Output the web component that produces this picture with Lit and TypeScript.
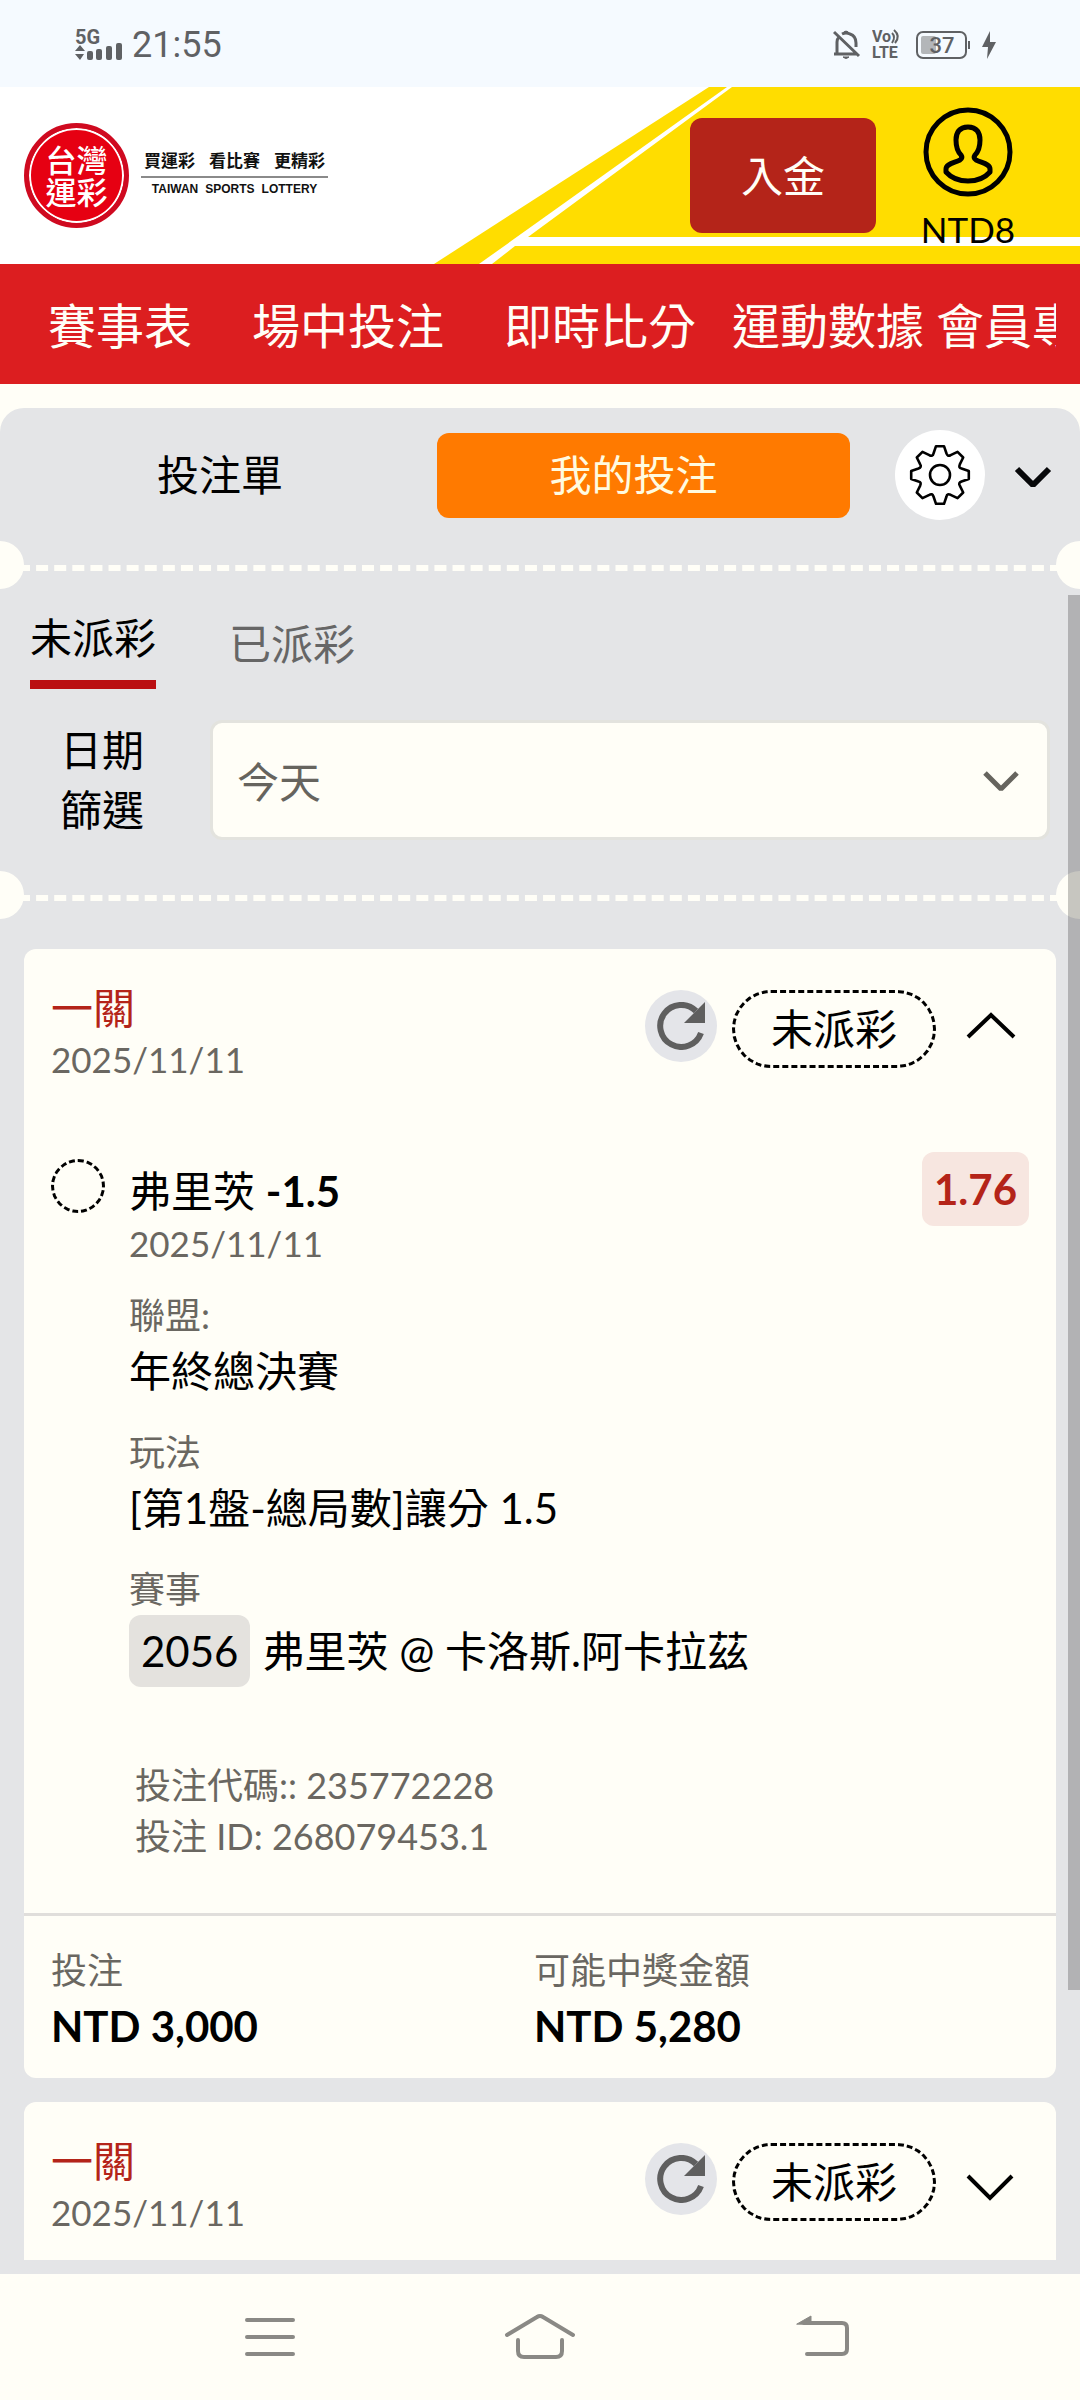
import { LitElement, html, css, svg, nothing } from "lit";
import { customElement, property } from "lit/decorators.js";

interface Pick {
  team: string;
  handicap: string;
  date: string;
  odds: string;
  league: string;
  market: string;
  eventNo: string;
  fixture: string;
  code: string;
  betId: string;
  stake: string;
  payout: string;
}

interface Bet {
  title: string;
  date: string;
  status: string;
  pick?: Pick;
}

const BETS: Bet[] = [
  {
    title: "一關",
    date: "2025/11/11",
    status: "未派彩",
    pick: {
      team: "弗里茨",
      handicap: "-1.5",
      date: "2025/11/11",
      odds: "1.76",
      league: "年終總決賽",
      market: "[第1盤-總局數]讓分 1.5",
      eventNo: "2056",
      fixture: "弗里茨 @ 卡洛斯.阿卡拉茲",
      code: "235772228",
      betId: "268079453.1",
      stake: "NTD 3,000",
      payout: "NTD 5,280",
    },
  },
  { title: "一關", date: "2025/11/11", status: "未派彩" },
];

const base = css`
  * {
    box-sizing: border-box;
  }
  button,
  select {
    font: inherit;
    color: inherit;
    background: none;
    border: 0;
    margin: 0;
    padding: 0;
  }
  a {
    color: inherit;
    text-decoration: none;
  }
  svg {
    display: block;
    flex: none;
  }
`;

/** Outline of an eight-toothed cog centred on the origin. */
function cogPath(): string {
  const tooth = [
    [-6.5, -21.5],
    [-4, -28.8],
    [4, -28.8],
    [6.5, -21.5],
    [7.9, -18],
  ];
  let d = "";
  for (let k = 0; k < 8; k++) {
    const a = (k * Math.PI) / 4;
    const p = tooth.map(([x, y]) => {
      const rx = x * Math.cos(a) - y * Math.sin(a);
      const ry = x * Math.sin(a) + y * Math.cos(a);
      return `${rx.toFixed(2)} ${ry.toFixed(2)}`;
    });
    d += `${k === 0 ? "M" : ""}${p[0]}L${p[1]}L${p[2]}L${p[3]}Q${p[4]} `;
  }
  return `${d}-6.5 -21.5Z`;
}

@customElement("status-bar")
export class StatusBar extends LitElement {
  static styles = [
    base,
    css`
      :host {
        display: flex;
        align-items: center;
        justify-content: space-between;
        height: 87px;
        padding: 2px 84px 0 75px;
        background: #f5faff;
        color: #5f6164;
        font-family: Roboto, sans-serif;
      }
      .side {
        display: flex;
        align-items: center;
      }
      .left {
        gap: 9px;
      }
      .right {
        gap: 11px;
      }
      .time {
        font-size: 36px;
        line-height: 42px;
      }
      .tiny {
        font-weight: 700;
        font-size: 16px;
      }
      .net {
        font-weight: 700;
        font-size: 20px;
      }
      .level {
        font-weight: 500;
        font-size: 22px;
      }
    `,
  ];

  render() {
    return html`
      <div class="side left">
        <svg width="48" height="48" viewBox="0 -8 48 48" fill="currentColor">
          <text class="net" x="0" y="15">5G</text>
          <path d="M5 16l5 6H0zM0 25h9l-4 6z" />
          <rect x="12" y="22" width="6" height="9" rx="2" />
          <rect x="21" y="20" width="6" height="11" rx="2" />
          <rect x="31" y="17" width="6" height="14" rx="2" />
          <rect x="41" y="14" width="6" height="17" rx="2" />
        </svg>
        <span class="time">21:55</span>
      </div>
      <div class="side right">
        <svg width="28" height="30" viewBox="0 0 28 30" fill="none" stroke="currentColor" stroke-width="3">
          <path d="M1 2L26 26M4 24V12Q4 9 6 7M1 24h23M9 4Q13 2 17 4Q23 6 23 13V17" />
          <path d="M10 27h6q-3 3-6 0zM11 2q2-2 4 0z" fill="currentColor" stroke-width="1" />
        </svg>
        <svg width="32" height="46" viewBox="0 -8 32 46" fill="currentColor">
          <text class="tiny" x="0" y="12">Vo</text>
          <text class="tiny" x="0" y="28">LTE</text>
          <path d="M20 3q4 4 0 10M22 0q7 6 1 13" fill="none" stroke="currentColor" stroke-width="2" />
        </svg>
        <svg width="56" height="42" viewBox="0 -6 56 42">
          <rect x="6" y="6" width="15" height="18" rx="2" fill="#b3b6b9" />
          <rect x="2" y="2" width="49" height="26" rx="6" fill="none" stroke="currentColor" stroke-width="2" />
          <path d="M54 11v8" stroke="currentColor" stroke-width="2" />
          <text class="level" x="27" y="23" text-anchor="middle" fill="currentColor">37</text>
        </svg>
        <svg width="14" height="28" viewBox="0 0 14 28" fill="currentColor">
          <path d="M8 0L0 16h6L5 28L14 11H8z" />
        </svg>
      </div>
    `;
  }
}

@customElement("site-header")
export class SiteHeader extends LitElement {
  static styles = [
    base,
    css`
      :host {
        display: flex;
        align-items: center;
        position: relative;
        height: 177px;
        padding: 0 64px 0 24px;
        background: #fff;
        overflow: hidden;
      }
      .stripes {
        position: absolute;
        right: 0;
        top: 0;
      }
      .brand {
        display: flex;
        align-items: center;
        gap: 12px;
      }
      .seal {
        display: grid;
        place-content: center;
        width: 105px;
        height: 105px;
        border-radius: 50%;
        border: 5px solid #cf0a20;
        background: #e60012;
        box-shadow: inset 0 0 0 2px #fff;
        color: #fff;
        font-weight: 500;
        font-size: 31px;
        line-height: 32px;
        text-align: center;
      }
      .words {
        display: flex;
        flex-direction: column;
        padding-bottom: 4px;
      }
      .slogan,
      .english {
        display: flex;
        justify-content: center;
        color: #111;
      }
      .slogan {
        gap: 14px;
        width: 187px;
        padding-bottom: 6px;
        border-bottom: 2px solid #8a8a8a;
        font-size: 17px;
        font-weight: 700;
        line-height: 18px;
      }
      .english {
        gap: 7px;
        padding-top: 4px;
        font: 700 12px/14px "Liberation Sans", sans-serif;
      }
      .account {
        display: flex;
        align-items: center;
        gap: 44px;
        margin-left: auto;
        position: relative;
      }
      .deposit {
        width: 186px;
        height: 115px;
        border-radius: 12px;
        background: #b42419;
        color: #fffef7;
        font-size: 42px;
      }
      .user {
        display: flex;
        flex-direction: column;
        align-items: center;
        gap: 7px;
        width: 96px;
        padding-top: 10px;
        font-size: 35px;
        line-height: 51px;
      }
    `,
  ];

  render() {
    return html`
      <svg class="stripes" width="646" height="177" viewBox="0 0 646 177" fill="#ffdd00">
        <path d="M275 0H293L45 177H0z" />
        <path d="M298 0H646V150H94z" />
        <path d="M81 159H646V177H58z" />
      </svg>
      <a class="brand" href="#">
        <span class="seal">台灣<br />運彩</span>
        <span class="words">
          <span class="slogan"><span>買運彩</span><span>看比賽</span><span>更精彩</span></span>
          <span class="english"><span>TAIWAN</span><span>SPORTS</span><span>LOTTERY</span></span>
        </span>
      </a>
      <div class="account">
        <button class="deposit">入金</button>
        <a class="user" href="#">
          <svg width="90" height="90" viewBox="0 0 90 90" fill="none" stroke="#000">
            <circle cx="45" cy="45" r="42" stroke-width="5" />
            <path
              stroke-width="5"
              stroke-linejoin="round"
              d="M45 20C36 20 33 26 33 33C33 41 35 45 38 48Q40 51 37 53C31 56 23 57 23 62V65Q31 74 45 74T67 65V62C67 57 59 56 53 53Q50 51 52 48C55 45 57 41 57 33C57 26 54 20 45 20Z"
            />
          </svg>
          <span>NTD8</span>
        </a>
      </div>
    `;
  }
}

@customElement("main-nav")
export class MainNav extends LitElement {
  static styles = [
    base,
    css`
      :host {
        display: block;
        padding: 0 24px 0 18px;
        background: #dc1e20;
        color: #fffef7;
      }
      .items {
        display: flex;
        overflow: hidden;
      }
      .item {
        flex: none;
        padding: 4px 6px 0;
        font-size: 48px;
        line-height: 116px;
        white-space: nowrap;
      }
      .roomy {
        padding-inline: 30px;
      }
    `,
  ];

  render() {
    const items = ["賽事表", "場中投注", "即時比分", "運動數據", "會員專區"];
    return html`<nav class="items">
      ${items.map((t, i) => html`<a class="item ${i < 3 ? "roomy" : ""}" href="#">${t}</a>`)}
    </nav>`;
  }
}

@customElement("ticket-divider")
export class TicketDivider extends LitElement {
  static styles = css`
    :host {
      display: block;
      position: relative;
      padding: 0 18px;
    }
    .line {
      border-top: 6px dashed #fffef7;
    }
    :host::before,
    :host::after {
      content: "";
      position: absolute;
      top: -24px;
      width: 48px;
      height: 48px;
      border-radius: 50%;
      background: #fffef7;
    }
    :host::before {
      left: -24px;
    }
    :host::after {
      right: -24px;
    }
  `;

  render() {
    return html`<div class="line"></div>`;
  }
}

@customElement("bet-card")
export class BetCard extends LitElement {
  @property({ attribute: false }) bet!: Bet;

  static styles = [
    base,
    css`
      :host {
        display: block;
        flex: none;
        border-radius: 12px;
        background: #fffef7;
        font-size: 42px;
        line-height: 60px;
      }
      .head {
        display: flex;
        justify-content: space-between;
        padding: 34px 27px 67px;
      }
      .title,
      .date,
      .label,
      .codes {
        line-height: 51px;
      }
      .title {
        color: #b42419;
      }
      .date,
      .label,
      .codes {
        font-size: 36px;
        color: #6a6761;
      }
      .date {
        font-size: 35px;
      }
      .actions {
        display: flex;
        align-items: flex-start;
        gap: 15px;
        padding-top: 7px;
      }
      .refresh {
        display: grid;
        place-content: center;
        width: 72px;
        height: 72px;
        border-radius: 50%;
        background: #e4e5e9;
      }
      .status {
        padding: 0 36px;
        border: 3px dashed #000;
        border-radius: 39px;
        line-height: 72px;
      }
      .pick {
        display: grid;
        grid-template-columns: 54px 1fr auto;
        column-gap: 24px;
        padding: 0 27px 51px;
      }
      .ring {
        width: 54px;
        height: 54px;
        margin-top: 7px;
        border: 3px dashed #000;
        border-radius: 50%;
      }
      .name {
        padding-top: 12px;
        line-height: 54px;
      }
      .odds {
        align-self: start;
        padding: 0 12px;
        border-radius: 12px;
        background: #f7e6e0;
        color: #b42419;
        font-weight: 700;
        line-height: 74px;
      }
      .fields {
        display: flex;
        flex-direction: column;
        gap: 26px;
        margin: 0;
        padding-top: 21px;
      }
      .value {
        margin: 0;
      }
      .event {
        display: flex;
        align-items: center;
        gap: 12px;
        line-height: 72px;
      }
      .number {
        padding: 0 12px;
        border-radius: 12px;
        background: #e4e2de;
      }
      .codes {
        padding: 73px 6px 0;
      }
      .sums {
        display: grid;
        grid-template-columns: 1fr 1fr;
        margin: 0;
        padding: 29px 39px 22px 27px;
        border-top: 3px solid #e0dedb;
      }
      .sum {
        font-weight: 700;
      }
    `,
  ];

  private renderPick(p: Pick) {
    return html`
      <div class="pick">
        <span class="ring"></span>
        <div>
          <div class="name">${p.team} <b>${p.handicap}</b></div>
          <div class="date">${p.date}</div>
          <dl class="fields">
            <div>
              <dt class="label">聯盟:</dt>
              <dd class="value">${p.league}</dd>
            </div>
            <div>
              <dt class="label">玩法</dt>
              <dd class="value">${p.market}</dd>
            </div>
            <div>
              <dt class="label">賽事</dt>
              <dd class="value event"><span class="number">${p.eventNo}</span><span>${p.fixture}</span></dd>
            </div>
          </dl>
          <div class="codes">
            <div>投注代碼:: ${p.code}</div>
            <div>投注 ID: ${p.betId}</div>
          </div>
        </div>
        <span class="odds">${p.odds}</span>
      </div>
      <dl class="sums">
        <div>
          <dt class="label">投注</dt>
          <dd class="value sum">${p.stake}</dd>
        </div>
        <div>
          <dt class="label">可能中獎金額</dt>
          <dd class="value sum">${p.payout}</dd>
        </div>
      </dl>
    `;
  }

  render() {
    const { title, date, status, pick } = this.bet;
    const arrow = pick ? svg`<path d="M17 47L40 25L63 47" />` : svg`<path d="M17 33L39 55L61 33" />`;
    return html`
      <div class="head">
        <div>
          <div class="title">${title}</div>
          <div class="date">${date}</div>
        </div>
        <div class="actions">
          <button class="refresh" aria-label="重新整理">
            <svg width="48" height="48" viewBox="0 0 48 48">
              <path d="M44 31A21 21 0 1 1 39 9" fill="none" stroke="#5f5f5f" stroke-width="6" />
              <path d="M48 0V21H27z" fill="#5f5f5f" />
            </svg>
          </button>
          <span class="status">${status}</span>
          <button class="toggle" aria-label="展開" aria-expanded=${pick ? "true" : "false"}>
            <svg width="78" height="78" viewBox="0 0 78 78" fill="none" stroke="#000" stroke-width="4">${arrow}</svg>
          </button>
        </div>
      </div>
      ${pick ? this.renderPick(pick) : nothing}
    `;
  }
}

@customElement("app-root")
export class AppRoot extends LitElement {
  static styles = [
    base,
    css`
      :host {
        display: flex;
        flex-direction: column;
        height: 100vh;
        overflow: hidden;
        background: #fffef7;
        color: #000;
        font-family: Lato, "Noto Sans CJK TC", sans-serif;
        font-size: 42px;
        line-height: 60px;
      }
      .panel {
        display: flex;
        flex: 1;
        flex-direction: column;
        position: relative;
        min-height: 0;
        margin-top: 24px;
        padding-bottom: 14px;
        border-radius: 24px 24px 0 0;
        background: #e4e5e7;
        overflow: hidden;
      }
      .modes {
        display: grid;
        grid-template-columns: 1fr 1fr auto auto;
        align-items: center;
        gap: 12px;
        padding: 22px 26px 45px 12px;
      }
      .mode {
        height: 85px;
        padding-left: 3px;
        border-radius: 12px;
      }
      .mode.on {
        padding: 0 20px 0 0;
        background: #ff7a00;
        color: #fffbe0;
      }
      .gear {
        display: grid;
        place-content: center;
        width: 90px;
        height: 90px;
        margin-left: 33px;
        border-radius: 50%;
        background: #fff;
      }
      .fold {
        margin-left: 15px;
      }
      .tabs {
        display: flex;
        align-items: flex-start;
        gap: 73px;
        padding: 37px 30px 31px;
      }
      .tab {
        padding: 6px 0 0;
        color: #666;
        line-height: 60px;
      }
      .tab.on {
        padding: 0 0 12px;
        border-bottom: 9px solid #ba0f12;
        color: #000;
      }
      .filter {
        display: flex;
        align-items: center;
        gap: 66px;
        padding: 0 30px 55px 60px;
      }
      .caption {
        flex: none;
      }
      .picker {
        display: grid;
        flex: 1;
        align-items: center;
      }
      .picker > * {
        grid-area: 1 / 1;
      }
      .select {
        appearance: none;
        width: 100%;
        height: 120px;
        padding: 3px 24px 0;
        border: 3px solid #e3e3de;
        border-radius: 12px;
        background: #fffef7;
        color: #66645e;
      }
      .caret {
        justify-self: end;
        margin-right: 30px;
        pointer-events: none;
      }
      .bets {
        display: flex;
        flex: 1;
        flex-direction: column;
        gap: 24px;
        min-height: 0;
        margin: 48px 24px 0;
        overflow: hidden;
      }
      .thumb {
        position: absolute;
        top: 187px;
        right: 0;
        width: 12px;
        height: 1395px;
        background: rgba(0, 0, 0, 0.22);
      }
      .keys {
        display: grid;
        flex: none;
        grid-template-columns: repeat(3, 1fr);
        place-items: center;
        height: 126px;
        padding: 0 135px;
      }
    `,
  ];

  render() {
    return html`
      <status-bar></status-bar>
      <site-header></site-header>
      <main-nav></main-nav>
      <main class="panel">
        <div class="modes">
          <button class="mode">投注單</button>
          <button class="mode on">我的投注</button>
          <button class="gear" aria-label="設定">
            <svg width="62" height="62" viewBox="-31 -31 62 62" fill="none" stroke="#000" stroke-width="2.6" stroke-linejoin="round">
              <path d=${cogPath()} />
              <circle r="10" />
            </svg>
          </button>
          <button class="fold" aria-label="收合">
            <svg width="42" height="42" viewBox="0 0 42 42" fill="none" stroke="#07080a" stroke-width="6" stroke-linejoin="bevel">
              <path d="M5 15L21 31L37 15" />
            </svg>
          </button>
        </div>
        <ticket-divider></ticket-divider>
        <div class="tabs">
          <button class="tab on">未派彩</button>
          <button class="tab">已派彩</button>
        </div>
        <div class="filter">
          <label class="caption" for="day">日期<br />篩選</label>
          <div class="picker">
            <select class="select" id="day">
              <option>今天</option>
            </select>
            <svg class="caret" width="38" height="24" viewBox="0 0 38 24" fill="none" stroke="#66645e" stroke-width="5" stroke-linejoin="bevel">
              <path d="M3 5L19 21L35 5" />
            </svg>
          </div>
        </div>
        <ticket-divider></ticket-divider>
        <div class="bets">${BETS.map((bet) => html`<bet-card .bet=${bet}></bet-card>`)}</div>
        <div class="thumb"></div>
      </main>
      <nav class="keys">
        <button aria-label="選單">
          <svg width="52" height="44" viewBox="0 0 52 44" fill="none" stroke="#8a8985" stroke-width="4" stroke-linecap="round">
            <path d="M3 5H49M3 22H49M3 39H49" />
          </svg>
        </button>
        <button aria-label="主畫面">
          <svg width="72" height="48" viewBox="0 0 72 48" fill="none" stroke="#8a8985" stroke-width="4" stroke-linecap="round">
            <path d="M3 22L33 4Q36 2 39 4L69 22M14 27V38Q14 44 20 44H52Q58 44 58 38V27" />
          </svg>
        </button>
        <button aria-label="返回">
          <svg width="80" height="46" viewBox="-26 0 80 46" fill="none" stroke="#8a8985" stroke-width="4" stroke-linecap="round">
            <path d="M8 9H46Q51 9 51 14V35Q51 40 46 40H11" />
            <path d="M1 10L15 2V10z" fill="#8a8985" stroke-width="1" />
          </svg>
        </button>
      </nav>
    `;
  }
}
